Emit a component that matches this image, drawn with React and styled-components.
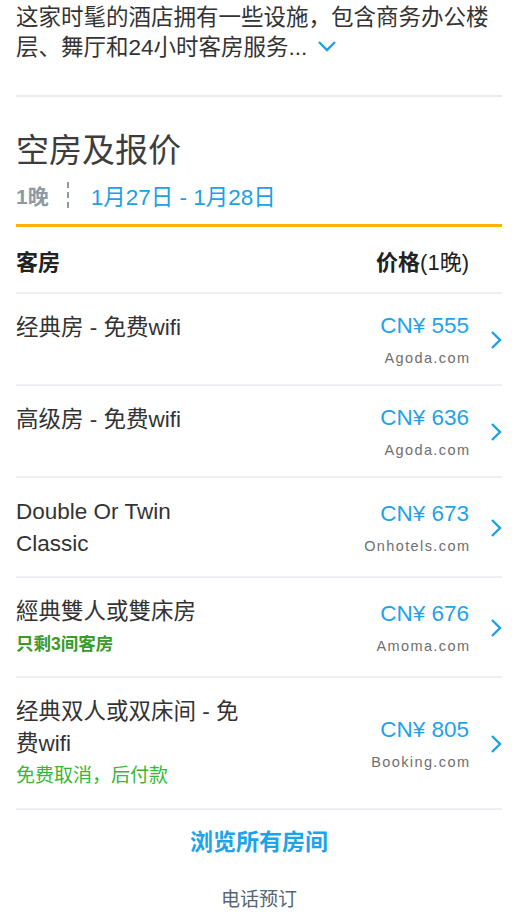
import React from "react";
import styled, { createGlobalStyle } from "styled-components";

const Global = createGlobalStyle`
  html, body { margin: 0; padding: 0; background: #fff; }
  body { font-family: "Liberation Sans", "Noto Sans CJK SC", sans-serif; color: #333; }
  * { box-sizing: border-box; }
`;

const Page = styled.div`
  padding: 0 16px;
  width: 518px;
`;

const Description = styled.p`
  margin: 0;
  font-size: 22.5px;
  line-height: 30px;
  color: #333;
  padding-top: 3px;
  padding-bottom: 32px;
  border-bottom: 2px solid #e9ecef;
`;

const ExpandIcon = styled.svg`
  width: 20px;
  height: 12px;
  margin-left: 10px;
  vertical-align: 3px;
`;

const Heading = styled.h2`
  margin: 0;
  padding-top: 34px;
  font-size: 33px;
  line-height: 40px;
  font-weight: normal;
  color: #3d3d3d;
`;

const Stay = styled.div`
  display: flex;
  align-items: center;
  height: 56px;
  padding: 6px 0 12px;
  border-bottom: 3px solid #fbb400;
`;

const Nights = styled.span`
  font-size: 21px;
  font-weight: bold;
  color: #8e9aa4;
`;

const DashDivider = styled.span`
  width: 0;
  height: 26px;
  border-left: 2px dashed #8e9aa4;
  margin: 0 22px 0 18px;
`;

const Dates = styled.span`
  font-size: 22.5px;
  color: #1aa1e6;
`;

const TableHead = styled.div`
  display: flex;
  justify-content: space-between;
  align-items: center;
  height: 67px;
  padding-right: 33px;
  border-bottom: 2px solid #eceef1;
  font-size: 22px;
  color: #222;
`;

const HeadLabel = styled.span`
  font-weight: bold;
`;

const Row = styled.div`
  display: flex;
  align-items: center;
  padding: 18px 0 16px;
  border-bottom: 2px solid #eceef1;
`;

const NameCol = styled.div`
  align-self: flex-start;
  flex: 1;
`;

const RoomName = styled.div`
  font-size: 22.5px;
  line-height: 32px;
  color: #333;
  max-width: 228px;
`;

const Note = styled.div`
  line-height: 32px;
  font-size: ${(p) => (p.$strong ? "17.5px" : "19px")};
  font-weight: ${(p) => (p.$strong ? "bold" : "normal")};
  color: ${(p) => (p.$strong ? "#3a9a2a" : "#35b934")};
`;

const PriceCol = styled.div`
  display: flex;
  flex-direction: column;
  align-items: flex-end;
`;

const Price = styled.div`
  font-size: 22.5px;
  line-height: 28px;
  color: #1ea3ea;
`;

const Source = styled.div`
  margin-top: 8px;
  font-size: 14.5px;
  line-height: 20px;
  letter-spacing: 1.4px;
  margin-right: -1.4px;
  color: #6f6f6f;
`;

const Chevron = styled.svg`
  width: 33px;
  height: 20px;
  flex: none;
`;

const BrowseAll = styled.div`
  text-align: center;
  padding-top: 16px;
  font-size: 23px;
  line-height: 32px;
  font-weight: bold;
  color: #1ea3ea;
`;

const Phone = styled.div`
  text-align: center;
  padding-top: 29px;
  font-size: 19px;
  line-height: 26px;
  color: #566673;
`;

const rooms = [
  { name: "经典房 - 免费wifi", price: "CN¥ 555", source: "Agoda.com" },
  { name: "高级房 - 免费wifi", price: "CN¥ 636", source: "Agoda.com" },
  { name: "Double Or Twin Classic", price: "CN¥ 673", source: "Onhotels.com" },
  { name: "經典雙人或雙床房", price: "CN¥ 676", source: "Amoma.com", note: "只剩3间客房", strong: true },
  { name: "经典双人或双床间 - 免费wifi", price: "CN¥ 805", source: "Booking.com", note: "免费取消，后付款" },
];

export default function App() {
  return (
    <Page>
      <Global />
      <Description>
        这家时髦的酒店拥有一些设施，包含商务办公楼层、舞厅和24小时客房服务...
        <ExpandIcon viewBox="0 0 20 12">
          <path d="M2 2 L10 10 L18 2" fill="none" stroke="#1aa1e6" strokeWidth="2.4" />
        </ExpandIcon>
      </Description>
      <Heading>空房及报价</Heading>
      <Stay>
        <Nights>1晚</Nights>
        <DashDivider />
        <Dates>1月27日 - 1月28日</Dates>
      </Stay>
      <TableHead>
        <HeadLabel>客房</HeadLabel>
        <span><HeadLabel>价格</HeadLabel>(1晚)</span>
      </TableHead>
      {rooms.map((r) => (
        <Row key={r.price}>
          <NameCol>
            <RoomName>{r.name}</RoomName>
            {r.note && <Note $strong={r.strong}>{r.note}</Note>}
          </NameCol>
          <PriceCol>
            <Price>{r.price}</Price>
            <Source>{r.source}</Source>
          </PriceCol>
          <Chevron viewBox="0 0 33 20">
            <path d="M23 2 L31 10 L23 18" fill="none" stroke="#1aa1e6" strokeWidth="2.4" />
          </Chevron>
        </Row>
      ))}
      <BrowseAll>浏览所有房间</BrowseAll>
      <Phone>电话预订</Phone>
    </Page>
  );
}
